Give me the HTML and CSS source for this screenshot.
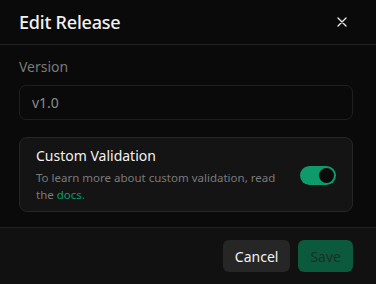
FILE: index.html
```html
<!DOCTYPE html>
<html lang="en">
<head>
    <meta charset="UTF-8">
    <meta name="viewport" content="width=device-width, initial-scale=1.0">
    <title>Edit Release</title>
    <link rel="stylesheet" href="styles.css">
</head>
<body>
    <div class="dialog">
        <div class="dialog-header">
            <h1>Edit Release</h1>
            <button class="close-button" aria-label="Close">
                <svg width="10" height="10" viewBox="0 0 10 10">
                    <path d="M1 1L9 9M9 1L1 9" stroke="#e8e8e8" stroke-width="1.4" stroke-linecap="round"/>
                </svg>
            </button>
        </div>

        <div class="dialog-body">
            <div class="form-group">
                <label for="version">Version</label>
                <input type="text" id="version" value="v1.0">
            </div>

            <div class="setting-card">
                <div class="setting-text">
                    <div class="setting-title">Custom Validation</div>
                    <p>To learn more about custom validation, read the <a href="#">docs.</a></p>
                </div>
                <span class="toggle on"><span class="knob"></span></span>
            </div>
        </div>

        <div class="dialog-footer">
            <button class="btn btn-cancel">Cancel</button>
            <button class="btn btn-save">Save</button>
        </div>
    </div>
</body>
</html>
```

FILE: styles.css
```css
:root {
    --bg: #0a0a0a;
    --footer-bg: #111111;
    --line: #222222;
    --text: #f2f2f2;
    --muted: #7a7a7a;
    --green: #0e9a6a;
}

body {
    margin: 0;
    background: var(--bg);
    color: var(--text);
    font-family: 'Noto Sans', 'Open Sans', sans-serif;
}

.dialog {
    height: 284px;
    display: flex;
    flex-direction: column;
}

.dialog-header {
    height: 44px;
    display: flex;
    align-items: center;
    justify-content: space-between;
    padding: 0 28px 0 19px;
    border-bottom: 1px solid var(--line);
}

.dialog-header h1 {
    margin: 0;
    font-size: 18px;
    font-weight: 500;
    letter-spacing: -0.2px;
}

.close-button {
    background: none;
    border: none;
    padding: 0;
    width: 12px;
    height: 12px;
    display: flex;
    align-items: center;
    justify-content: center;
    cursor: pointer;
}

.dialog-body {
    padding: 12px 23px 15px 19px;
    flex: 1;
}

.form-group label {
    display: block;
    font-size: 14px;
    color: var(--muted);
    line-height: 20px;
    margin-bottom: 8px;
}

.form-group input {
    width: 100%;
    box-sizing: border-box;
    height: 35px;
    padding: 0 12px;
    background: var(--bg);
    border: 1px solid #1f1f1f;
    border-radius: 7px;
    color: #8a8a8a;
    font-family: inherit;
    font-size: 14px;
}

.setting-card {
    margin-top: 17px;
    height: 75px;
    box-sizing: border-box;
    background: #141414;
    border: 1px solid #262626;
    border-radius: 8px;
    display: flex;
    align-items: center;
    padding: 0 16px 0 16px;
}

.setting-text {
    flex: 1;
}

.setting-title {
    font-size: 14px;
    line-height: 20px;
    color: var(--text);
}

.setting-text p {
    margin: 3px 0 0;
    font-size: 11.5px;
    line-height: 17px;
    color: var(--muted);
    max-width: 245px;
}

.setting-text a {
    color: var(--green);
    text-decoration: none;
}

.toggle {
    width: 36px;
    height: 19px;
    border-radius: 10px;
    background: #2a2a2a;
    display: flex;
    align-items: center;
    padding: 0 2px;
    box-sizing: border-box;
    margin-left: 12px;
    margin-top: 2px;
}

.toggle.on {
    background: var(--green);
    justify-content: flex-end;
}

.knob {
    width: 15px;
    height: 15px;
    border-radius: 50%;
    background: #0b0b0b;
}

.dialog-footer {
    background: var(--footer-bg);
    border-top: 1px solid var(--line);
    height: 56px;
    display: flex;
    align-items: center;
    justify-content: flex-end;
    gap: 8px;
    padding: 0 23px 0 19px;
}

.btn {
    height: 32px;
    border: none;
    border-radius: 6px;
    font-family: inherit;
    font-size: 14px;
    padding: 0 12px;
    cursor: pointer;
}

.btn-cancel {
    background: #262626;
    color: #f2f2f2;
}

.btn-save {
    background: #0b5a3d;
    color: #1e2f27;
}
```
